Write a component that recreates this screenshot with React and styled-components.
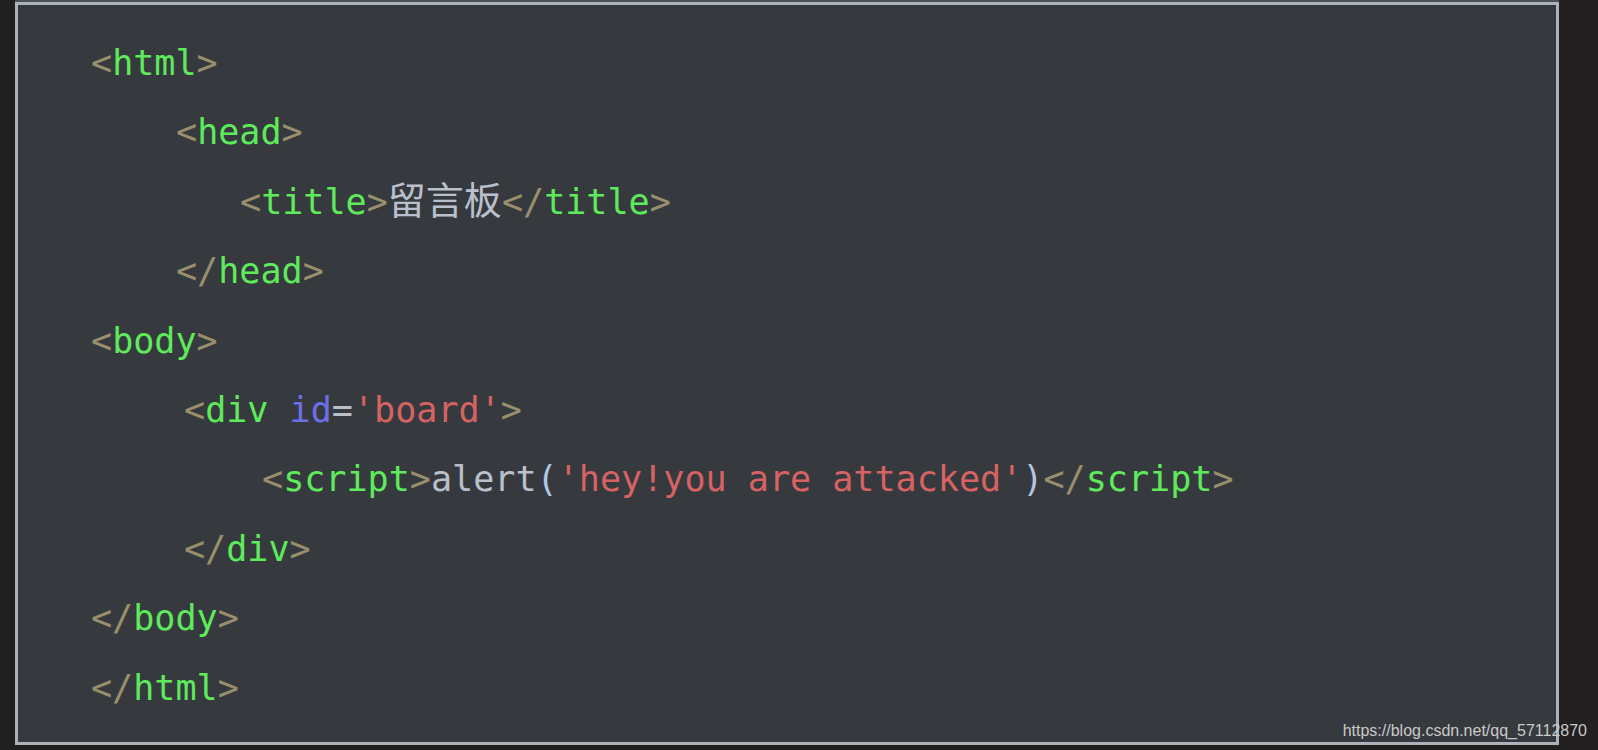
import React from 'react'
import styled, { createGlobalStyle } from 'styled-components'

const GlobalStyle = createGlobalStyle`
    html, body {
        margin: 0;
        padding: 0;
        background: #211f1f;
    }
`

const Page = styled.div`
    position: relative;
    width: 1598px;
    height: 750px;
    padding: 2px 39px 5px 15px;
    box-sizing: border-box;
    background: #211f1f;
    overflow: hidden;
`

const Panel = styled.div`
    height: 100%;
    box-sizing: border-box;
    border: 3px solid #abb2bb;
    box-shadow: 0 -2px 0 #4d5258;
    background: #363a3f;
    padding-top: 23px;
    font-family: 'DejaVu Sans Mono', 'Liberation Mono', monospace;
    font-size: 35.1px;
    line-height: 69.4px;
    color: #b9c0cc;
`

const Line = styled.div`
    height: 69.4px;
    padding-left: ${props => props.$indent}px;
    white-space: pre;
`

const Bracket = styled.span`
    color: #9a8f6c;
`

const Tag = styled.span`
    color: #5eea5a;
`

const Attr = styled.span`
    color: #6b6fe8;
`

const Str = styled.span`
    color: #d76262;
`

const Paren = styled.span`
    color: #b0c8e6;
`

const Cjk = styled.span`
    font-family: 'Noto Sans CJK SC', sans-serif;
    font-size: 38px;
    line-height: 0;
    color: #b9c0cc;
`

const Watermark = styled.div`
    position: absolute;
    right: 11px;
    bottom: 10px;
    font-family: 'Liberation Sans', Arial, sans-serif;
    font-size: 16px;
    color: #c9c9c9;
`

const Open = ({ name, children }) => (
    <>
        <Bracket>&lt;</Bracket>
        <Tag>{name}</Tag>
        {children}
        <Bracket>&gt;</Bracket>
    </>
)

const Close = ({ name }) => (
    <>
        <Bracket>&lt;/</Bracket>
        <Tag>{name}</Tag>
        <Bracket>&gt;</Bracket>
    </>
)

const App = () => {
  return (
    <>
        <GlobalStyle />
        <Page>
            <Panel>
                <Line $indent={73}><Open name='html' /></Line>
                <Line $indent={158}><Open name='head' /></Line>
                <Line $indent={222}>
                    <Open name='title' /><Cjk>留言板</Cjk><Close name='title' />
                </Line>
                <Line $indent={158}><Close name='head' /></Line>
                <Line $indent={73}><Open name='body' /></Line>
                <Line $indent={166}>
                    <Open name='div'>
                        {' '}<Attr>id</Attr>=<Str>'board'</Str>
                    </Open>
                </Line>
                <Line $indent={244}>
                    <Open name='script' />alert<Paren>(</Paren><Str>'hey!you are attacked'</Str><Paren>)</Paren><Close name='script' />
                </Line>
                <Line $indent={166}><Close name='div' /></Line>
                <Line $indent={73}><Close name='body' /></Line>
                <Line $indent={73}><Close name='html' /></Line>
            </Panel>
            <Watermark>https://blog.csdn.net/qq_57112870</Watermark>
        </Page>
    </>
  )
}

export default App
